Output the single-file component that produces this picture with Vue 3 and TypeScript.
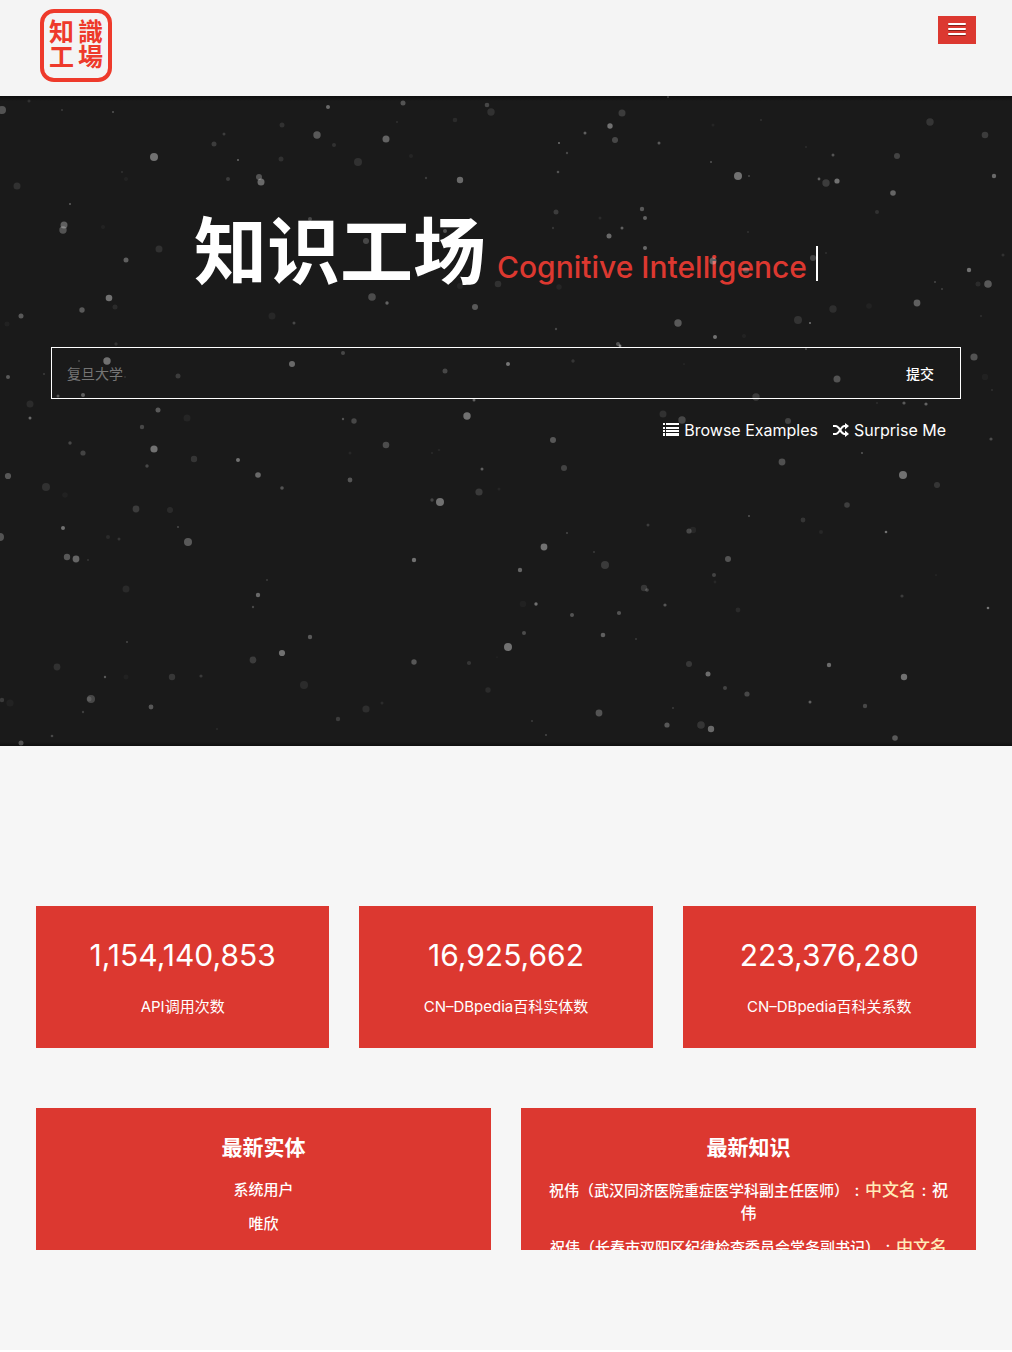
<script setup lang="ts">
import { ref } from 'vue'

type Star = [x: number, y: number, r: number, alpha: number]

const query = ref('')

const sealGlyphs = ['知', '識', '工', '場']

const stars: Star[] = [
  [2, 14, 4, .25], [29, 5, 1.5, .1], [62, 14, 1, .15], [113, 16, 1, .25], [328, 11, 2, .35], [282, 29, 2.5, .1],
  [317, 39, 3.7, .28], [224, 38, 1.5, .15], [214, 48, 2.5, .15], [334, 49, 2, .1], [154, 61, 4, .38], [281, 63, 2.5, .1],
  [238, 64, 1, .35], [259, 81, 3, .25], [261, 86, 3.5, .35], [228, 83, 2, .15], [17, 90, 3.5, .1], [126, 83, 2, .04],
  [122, 76, 1, .1], [70, 108, 1, .3], [64, 129, 3.5, .3], [63, 134, 3.7, .25], [103, 131, 2, .04], [159, 153, 3.5, .1],
  [126, 164, 2.5, .3], [204, 133, 3, .2], [310, 123, 2, .2], [109, 202, 3.3, .38], [115, 211, 2.5, .08], [82, 214, 2.7, .28],
  [21, 220, 2.5, .28], [7, 228, 2.5, .04], [272, 220, 3.5, .06], [294, 227, 1.5, .2], [116, 248, 1.7, .1], [107, 265, 3.7, .38],
  [79, 265, 1, .2], [292, 268, 3, .35], [8, 281, 2, .28], [44, 278, 1, .15], [178, 280, 2.5, .15], [125, 281, 1, .1],
  [58, 300, 1.5, .25], [83, 299, 2, .3], [30, 308, 3.5, .08], [30, 322, 1.5, .35], [158, 314, 2.5, .28], [187, 322, 3.5, .05],
  [403, 7, 2.5, .25], [487, 9, 2.3, .2], [491, 16, 3.7, .1], [455, 24, 2.3, .08], [386, 43, 3.5, .32], [397, 26, .7, .2],
  [358, 66, 4, .1], [411, 60, 2, .05], [426, 82, 1.2, .15], [460, 84, 3.2, .35], [622, 17, 3.5, .15], [610, 30, 2.7, .38],
  [615, 44, 3, .2], [585, 37, 1.5, .3], [559, 47, 1, .38], [567, 57, 1.2, .2], [558, 76, 1.3, .25], [659, 47, 1.5, .28],
  [556, 116, 2.5, .15], [642, 113, 2.2, .28], [645, 122, 2, .32], [600, 122, 1.5, .08], [553, 132, 1.2, .12], [622, 132, 1.5, .3],
  [609, 140, 2.5, .35], [645, 152, 2, .35], [366, 145, 3, .2], [445, 135, 2, .25], [498, 188, 3.3, .1], [460, 190, 3, .05],
  [559, 191, 2.7, .05], [372, 201, 3.8, .22], [387, 207, 1.7, .32], [475, 211, 3, .28], [556, 233, 1.2, .2], [618, 248, 2, .25],
  [620, 250, 1.4, .45], [678, 227, 3.7, .28], [343, 257, 2, .2], [445, 275, 2.5, .2], [508, 268, 2, .4], [573, 265, 1.7, .12],
  [474, 304, 1.5, .3], [467, 320, 3.7, .38], [663, 318, 3.5, .1], [343, 323, 1.2, .25], [354, 325, 2.7, .2], [668, 1, 1, .2],
  [930, 26, 3.7, .12], [985, 39, 3.3, .15], [761, 24, 1, .1], [713, 29, 1.5, .05], [806, 51, 1, .08], [711, 66, 1, .25],
  [738, 80, 4, .38], [749, 80, 1, .2], [833, 59, 1.5, .25], [897, 60, 3, .18], [819, 83, 1.4, .3], [826, 87, 3.7, .15],
  [837, 85, 2.6, .38], [893, 97, 2.8, .33], [994, 80, 2.2, .35], [877, 116, 2, .1], [748, 136, 1, .1], [826, 157, .7, .2],
  [1003, 159, 1.5, .1], [713, 165, 3.5, .3], [746, 174, 3, .2], [813, 162, 3, .18], [969, 174, 2.2, .38], [978, 188, 2.5, .08],
  [988, 188, 3.8, .28], [935, 186, 1, .2], [942, 193, .8, .3], [917, 207, 3.4, .3], [833, 213, 3.7, .09], [869, 210, 2.8, .04],
  [798, 224, 4, .11], [810, 227, 1, .4], [715, 241, 2, .38], [744, 240, 2, .04], [974, 261, 3.6, .25], [985, 281, 3.2, .03],
  [806, 253, 1, .2], [837, 283, 3.5, .25], [756, 301, 3.7, .15], [904, 307, 1.6, .28], [926, 308, 1.6, .32], [682, 324, 3.7, .2],
  [788, 325, 3, .18], [981, 220, .7, .2], [992, 294, .7, .2], [877, 307, .8, .15], [684, 268, .5, .2],
  [142, 331, 2.2, .2], [70, 347, 1.7, .2], [83, 357, 2.6, .18], [154, 353, 3.6, .38], [147, 370, 1.7, .2], [194, 363, 3.2, .12],
  [238, 364, 2, .38], [258, 379, 2.8, .35], [282, 392, 1.8, .25], [8, 380, 3.1, .27], [46, 391, 4, .1], [65, 399, 2.8, .03],
  [136, 413, 3.4, .15], [170, 414, 3, .08], [63, 432, 2, .38], [108, 441, 2, .07], [119, 443, 1.5, .12], [178, 431, 1.1, .2],
  [0, 441, 4, .25], [188, 446, 4, .28], [67, 461, 3.2, .27], [76, 463, 3.4, .33], [88, 464, .7, .25], [126, 493, 3.5, .07],
  [267, 484, 1, .15], [258, 499, 2.2, .35], [253, 511, 1.2, .2], [127, 546, 1, .2], [310, 541, 2.2, .28], [282, 557, 3.1, .38],
  [253, 564, 3.4, .15], [57, 571, 3.4, .1], [105, 581, 1.2, .28], [126, 581, 2.5, .03], [172, 581, 3.2, .13], [201, 580, 1.6, .14],
  [304, 589, 4, .08], [91, 603, 4, .2], [89, 603, 2.5, .12], [2, 604, 2.2, .14], [10, 607, 3.6, .04], [83, 616, 1.2, .16],
  [151, 611, 2.4, .27], [217, 633, 1.2, .06], [52, 640, 1.3, .2], [21, 647, 2.5, .25], [338, 623, 2.2, .15],
  [386, 349, 3.3, .22], [350, 357, 1.5, .06], [439, 354, 1.3, .05], [432, 357, 1.2, .06], [350, 384, 2.4, .26], [482, 373, 1.5, .3],
  [553, 344, 3, .27], [564, 372, 3, .18], [479, 396, 3.6, .14], [499, 393, 1.5, .05], [432, 404, 1.7, .18], [440, 406, 4, .38],
  [544, 451, 3.4, .38], [567, 437, 1, .2], [648, 429, 1.5, .15], [594, 456, .7, .3], [605, 469, 4, .14], [414, 464, 2.2, .38],
  [520, 474, 2.2, .33], [523, 508, 3.3, .03], [536, 508, 1.7, .38], [572, 519, 2, .25], [619, 517, 2.1, .25], [644, 492, 3.2, .13],
  [647, 494, 1.8, .2], [665, 509, 1.6, .26], [524, 537, 2, .22], [603, 539, 2.3, .3], [508, 551, 4, .38], [636, 543, 1, .14],
  [414, 566, 2.7, .27], [469, 567, 2.1, .12], [488, 594, 2.7, .08], [366, 613, 3.6, .09], [382, 607, 1.5, .08], [599, 617, 3.4, .25],
  [667, 629, 2.6, .27], [673, 612, 1, .15], [532, 625, 1, .15], [546, 639, 1, .2], [497, 561, .6, .1],
  [991, 343, 1.6, .22], [862, 357, .9, .3], [782, 366, 3.4, .24], [903, 379, 4, .38], [937, 389, 3, .12], [847, 409, 2.8, .16],
  [749, 420, 1, .25], [803, 424, 2.4, .12], [821, 436, 2, .06], [886, 436, 1.3, .38], [689, 435, 2.6, .2], [693, 434, 3.2, .06],
  [728, 463, 3, .25], [714, 479, 2, .18], [715, 486, 1.4, .06], [738, 514, 2.4, .07], [902, 500, 1.6, .15], [988, 512, 1.3, .4],
  [689, 568, 3, .13], [708, 578, 2.5, .36], [829, 569, 2.2, .36], [904, 581, 3.2, .38], [725, 592, 2, .18], [747, 598, 2.6, .2],
  [810, 606, 1.5, .3], [865, 610, 2.2, .2], [701, 629, 3.8, .12], [711, 633, 3.2, .35], [895, 642, 2.8, .28], [936, 479, .5, .2],
]

const stats = [
  { value: '1,154,140,853', label: 'API调用次数' },
  { value: '16,925,662', label: 'CN–DBpedia百科实体数' },
  { value: '223,376,280', label: 'CN–DBpedia百科关系数' },
]

const entities = ['系统用户', '唯欣']

const facts = [
  { entity: '祝伟（武汉同济医院重症医学科副主任医师）', attribute: '中文名', value: '祝伟' },
  { entity: '祝伟（长春市双阳区纪律检查委员会常务副书记）', attribute: '中文名', value: '' },
]
</script>

<template>
  <div class="page">
    <header class="topbar">
      <a href="#" class="seal" lang="zh-Hant">
        <span v-for="glyph in sealGlyphs" :key="glyph">{{ glyph }}</span>
      </a>
      <button type="button" class="menu" aria-label="菜单">
        <span class="bar"></span>
        <span class="bar"></span>
        <span class="bar"></span>
      </button>
    </header>

    <section class="hero">
      <h1 class="title">
        <span class="name">知识工场</span>
        <span class="slogan">Cognitive Intelligence</span>
        <span class="caret"></span>
      </h1>
      <form class="search" @submit.prevent>
        <input v-model="query" type="text" placeholder="复旦大学" aria-label="搜索" />
        <button type="submit">提交</button>
      </form>
      <nav class="links">
        <a href="#">
          <svg width="16" height="14" viewBox="0 0 16 14" fill="currentColor" aria-hidden="true">
            <path d="M0 0h2v2H0zM3 0h13v2H3zM0 4h2v2H0zM3 4h13v2H3zM0 7h2v2H0zM3 7h13v2H3zM0 10h2v3H0zM3 10h13v3H3z" />
          </svg>
          Browse Examples
        </a>
        <a href="#">
          <svg width="16" height="14" viewBox="0 0 16 14" aria-hidden="true">
            <path d="M0 3h2.500c4.500 0 5 8 9 8H13M0 11h2.500c4.500 0 5-8 9-8H13" fill="none" stroke="currentColor" stroke-width="2" />
            <path d="M12 0l4 3-4 3.500zM12 7.500l4 3.500-4 3z" fill="currentColor" />
          </svg>
          Surprise Me
        </a>
      </nav>
      <svg class="stars" aria-hidden="true">
        <circle v-for="([x, y, r, alpha], i) in stars" :key="i" :cx="x" :cy="y" :r="r" fill="#fff" :fill-opacity="alpha" />
      </svg>
    </section>

    <main class="content">
      <div class="row three">
        <article v-for="stat in stats" :key="stat.label" class="card stat">
          <p class="value">{{ stat.value }}</p>
          <p class="label">{{ stat.label }}</p>
        </article>
      </div>
      <div class="row two">
        <article class="card feed">
          <h2>最新实体</h2>
          <ul class="entities">
            <li v-for="entity in entities" :key="entity">{{ entity }}</li>
          </ul>
        </article>
        <article class="card feed">
          <h2>最新知识</h2>
          <ul class="facts">
            <li v-for="fact in facts" :key="fact.entity"><span class="entity">{{ fact.entity }}</span><span class="colon">:</span><span class="attribute">{{ fact.attribute }}</span><template v-if="fact.value"><span class="colon">:</span>{{ fact.value }}</template></li>
          </ul>
        </article>
      </div>
    </main>
  </div>
</template>

<style>
body {
  margin: 0;
  background: #fff;
}
</style>

<style scoped>
.page {
  font-family: Inter, "Noto Sans CJK SC", sans-serif;
  color: #fff;
}

.page *,
.page *::before {
  box-sizing: border-box;
}

.topbar {
  display: flex;
  justify-content: space-between;
  align-items: flex-start;
  height: 96px;
  padding: 9px 36px;
  background: #f4f4f4;
}

.seal {
  display: grid;
  grid-template-columns: 29px 29px;
  grid-auto-rows: 25px;
  place-content: center;
  justify-items: center;
  width: 72px;
  height: 73px;
  margin-left: 4px;
  padding-bottom: 6px;
  border: 4px solid #ee3a2b;
  border-radius: 14px;
  color: #ee3a2b;
  font-family: "Noto Sans CJK TC", sans-serif;
  font-size: 25px;
  font-weight: 700;
  line-height: 25px;
  text-decoration: none;
}

.menu {
  display: flex;
  flex-direction: column;
  align-items: center;
  gap: 3px;
  width: 38px;
  height: 28px;
  margin-top: 7px;
  padding: 7px 10px;
  border: 0;
  background: #dc3830;
}

.bar {
  width: 18px;
  height: 2px;
  border-radius: 1px;
  background: #fff;
  box-shadow: 0 1px 0 rgba(0, 0, 0, .4);
}

.hero {
  position: relative;
  min-height: 650px;
  padding: 106px 51px 0;
  background: linear-gradient(#0e0e0e, #1a1a1a 5px, #1a1a1a calc(100% - 4px), #101010);
  overflow: hidden;
}

.title {
  display: flex;
  justify-content: center;
  align-items: baseline;
  margin: 0;
  line-height: 100px;
}

.name {
  font-size: 73px;
  font-weight: 700;
}

.slogan {
  margin-left: 11px;
  color: #dc3830;
  font-size: 30px;
  font-weight: 500;
}

.caret {
  align-self: center;
  width: 2px;
  height: 35px;
  margin: 8px 0 0 9px;
  background: #fff;
}

.search {
  display: flex;
  height: 52px;
  margin-top: 30px;
  border: 1px solid #fff;
}

.search input {
  flex: 1;
  min-width: 0;
  padding: 0 15px;
  border: 0;
  background: transparent;
  color: #fff;
  font: inherit;
  font-size: 14px;
}

.search input::placeholder {
  color: #757575;
}

.search button {
  padding: 0 26px;
  border: 0;
  background: transparent;
  color: #fff;
  font: inherit;
  font-size: 14px;
  font-weight: 500;
}

.links {
  display: flex;
  justify-content: flex-end;
  gap: 15px;
  margin-top: 20px;
  padding-right: 15px;
  font-size: 16px;
  line-height: 22px;
}

.links a {
  display: flex;
  align-items: center;
  gap: 5px;
  color: #fff;
  text-decoration: none;
}

.stars {
  position: absolute;
  inset: 0;
  width: 100%;
  height: 100%;
  pointer-events: none;
}

.content {
  display: flex;
  flex-direction: column;
  gap: 60px;
  padding: 160px 36px 100px;
  background: #f6f6f6;
}

.row {
  display: grid;
  gap: 30px;
}

.three {
  grid-template-columns: repeat(3, 1fr);
}

.two {
  grid-template-columns: repeat(2, 1fr);
}

.card {
  height: 142px;
  background: #dc3830;
  text-align: center;
  overflow: hidden;
}

.card p,
.card h2,
.card ul {
  margin: 0;
  padding: 0;
  list-style: none;
}

.stat {
  padding-top: 29px;
}

.value {
  font-size: 30px;
  line-height: 40px;
}

.card .label {
  margin-top: 21px;
  font-size: 15px;
  line-height: 22px;
}

.feed {
  padding: 26px 25px 0;
}

.feed h2 {
  font-size: 21px;
  font-weight: 700;
  line-height: 28px;
}

.entities,
.facts {
  font-weight: 500;
  text-spacing-trim: space-all;
}

.card.feed ul {
  padding-top: 5px;
}

.feed li {
  margin-top: 12px;
  font-size: 15px;
  line-height: 22px;
}

.feed .facts li {
  font-size: 16px;
}

.facts .entity {
  font-size: 15px;
}

.facts .colon {
  display: inline-block;
  width: 16px;
}

.facts .attribute {
  color: #ffebb8;
  font-size: 17px;
}
</style>
